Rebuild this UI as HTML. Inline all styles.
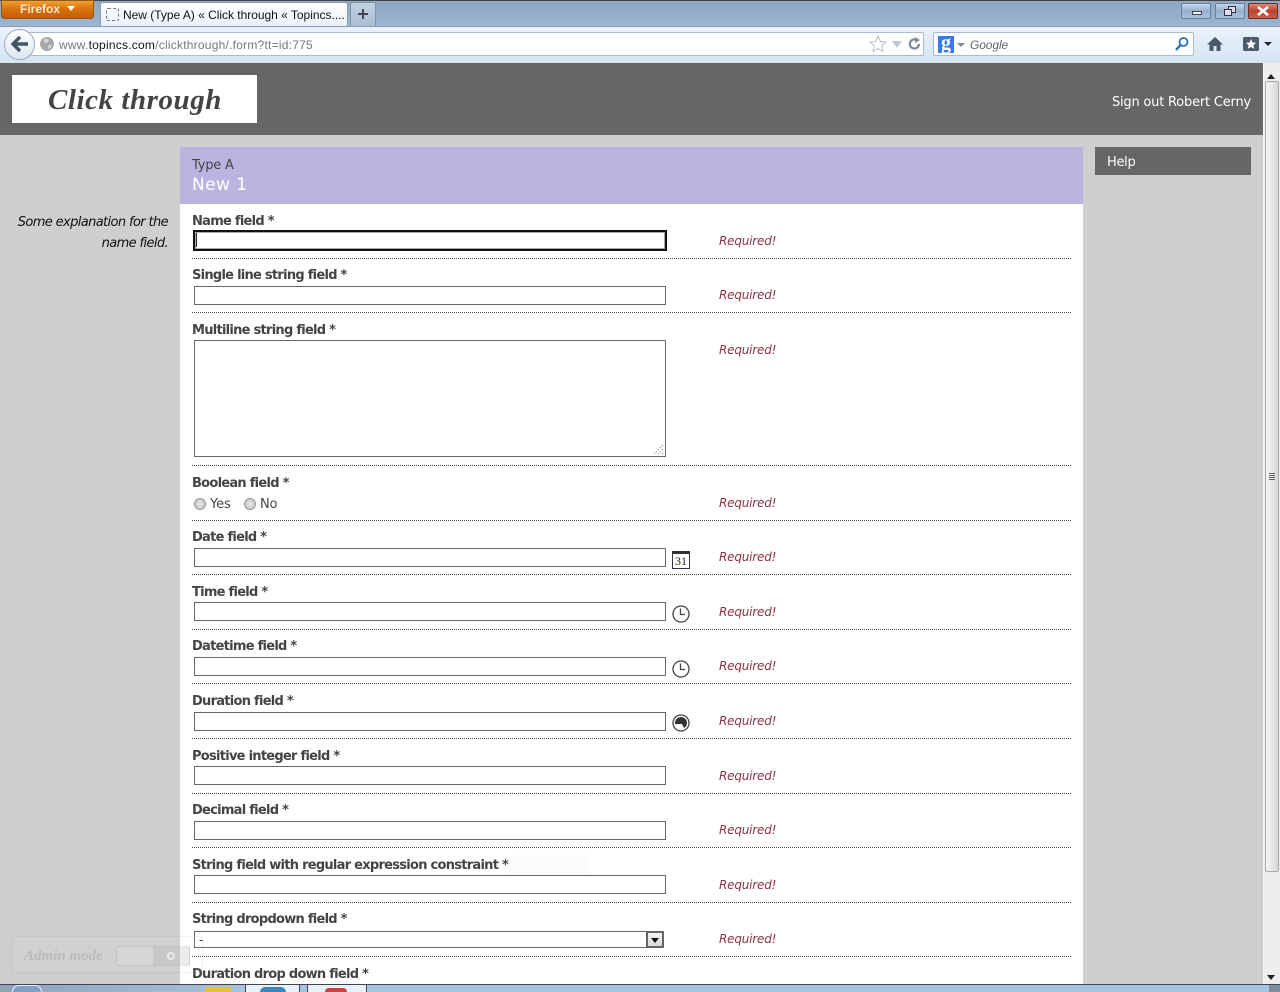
<!DOCTYPE html>
<html><head><meta charset="utf-8"><title>New (Type A) « Click through « Topincs</title>
<style>
html,body{margin:0;padding:0;width:1280px;height:992px;overflow:hidden;background:#cfcfcf;font-family:"DejaVu Sans",sans-serif}
div,span,svg{position:absolute;box-sizing:border-box}
#w{left:0;top:0;width:1280px;height:992px;overflow:hidden;background:#cfcfcf}
.t{white-space:nowrap;line-height:16px}
.ff{font-family:"Liberation Sans",sans-serif}
.l{left:192px;font-weight:bold;font-size:13px;color:#444;letter-spacing:-.73px;margin-top:1px}
.r{left:719px;font-style:italic;font-size:12px;color:#8a3344;letter-spacing:-.2px}
.i{left:194px;width:472px;height:19px;background:#fff;border:1px solid #666}
.h{left:192px;width:879px;height:1px;background-image:linear-gradient(90deg,#444 50%,transparent 50%);background-size:2px 1px}
</style></head><body><div id="w">
<!-- browser chrome -->
<div style="left:0;top:0;width:1280px;height:26px;background:linear-gradient(#8ea6bf,#9db6d0)"></div>
<div style="left:0;top:0;width:1280px;height:1px;background:#444"></div>
<div style="left:1px;top:0;width:93px;height:19px;background:linear-gradient(#f0a030,#d8700c 50%,#c45f08);border:1px solid #8a5a20;border-radius:0 0 3px 3px"></div>
<div class="t ff" style="left:20px;top:1px;font-size:12px;font-weight:bold;color:#f8e8d0">Firefox</div>
<div style="left:67px;top:6px;width:0;height:0;border:4px solid transparent;border-top:5px solid #fff"></div>
<div style="left:100px;top:2px;width:248px;height:25px;background:linear-gradient(#fff,#e8f0f8);border:1px solid #8a9db2;border-bottom:0;border-radius:3px 3px 0 0"></div>
<div style="left:106px;top:8px;width:13px;height:13px;border:1px dashed #777;border-radius:2px"></div>
<div class="t ff" style="left:123px;top:7px;font-size:12px;color:#111;letter-spacing:-.02px">New (Type A) « Click through « Topincs....</div>
<div style="left:350px;top:2px;width:26px;height:24px;background:linear-gradient(#c3d2e2,#a9bdd2);border:1px solid #8093a8;border-bottom:0;border-radius:2px 2px 0 0"></div>
<div style="left:358px;top:13px;width:10px;height:2px;background:#445"></div>
<div style="left:362px;top:9px;width:2px;height:10px;background:#445"></div>
<div style="left:1181px;top:3px;width:30px;height:16px;background:linear-gradient(#c5d7ea,#95b0cc 50%,#a9c2dc);border:1px solid #6b7f96;border-radius:2px"></div>
<div style="left:1192px;top:11px;width:10px;height:4px;background:#eef;border:1px solid #445"></div>
<div style="left:1215px;top:3px;width:30px;height:16px;background:linear-gradient(#c5d7ea,#95b0cc 50%,#a9c2dc);border:1px solid #6b7f96;border-radius:2px"></div>
<div style="left:1228px;top:6px;width:8px;height:7px;border:1px solid #334;background:#dde"></div>
<div style="left:1224px;top:9px;width:8px;height:7px;border:1px solid #334;background:#dde"></div>
<div style="left:1248px;top:3px;width:30px;height:16px;background:linear-gradient(#dc8a78,#b8432c 50%,#c8604a);border:1px solid #6a2a2a;border-radius:2px"></div>
<svg style="left:1257px;top:6px" width="12" height="10"><path d="M1 1L11 9M11 1L1 9" stroke="#fff" stroke-width="2.6"/></svg>
<div style="left:0;top:26px;width:1280px;height:37px;background:linear-gradient(#e9f2fb,#d6e4f3);border-top:1px solid #8b9cb0"></div>
<div style="left:26px;top:32px;width:898px;height:24px;background:#fff;border:1px solid #a9bbd0;border-radius:2px"></div>
<div style="left:4px;top:29px;width:31px;height:31px;border-radius:50%;background:linear-gradient(#fff,#dde7f2);border:1px solid #9aacc0"></div>
<svg style="left:10px;top:35px" width="20" height="18"><path d="M10 2L3 9L10 16M3 9H18" fill="none" stroke="#445566" stroke-width="3.4"/></svg>
<div style="left:40px;top:37px;width:14px;height:14px;border-radius:50%;background:#a8a8a8"></div>
<svg style="left:40px;top:37px" width="14" height="14"><path d="M5 1L9 3L7 6L4 5ZM9 8L12 8L10 12L8 11Z" fill="#d8d8d8"/></svg>
<div class="t ff" style="left:59px;top:37px;font-size:12px;color:#777;letter-spacing:.23px">www.<span style="position:static;color:#111">topincs.com</span>/clickthrough/.form?tt=id:775</div>
<svg style="left:869px;top:35px" width="18" height="18"><path d="M9 1L11.4 6.5L17 7L12.8 10.8L14 16.5L9 13.6L4 16.5L5.2 10.8L1 7L6.6 6.5Z" fill="#fff" stroke="#b8bcc0"/></svg>
<div style="left:892px;top:41px;width:0;height:0;border:5px solid transparent;border-top:7px solid #c0c8d0"></div>
<svg style="left:908px;top:37px" width="13" height="14"><path d="M11 7A4.6 4.6 0 1 1 8 2.6" fill="none" stroke="#7d8a96" stroke-width="2.2"/><path d="M7 0L12 3L7 6Z" fill="#7d8a96"/></svg>
<div style="left:933px;top:32px;width:261px;height:24px;background:#fff;border:1px solid #a9bbd0;border-radius:2px"></div>
<div class="t" style="left:938px;top:36px;width:16px;height:17px;background:#3b78e7;color:#fff;font:bold 20px/15px 'Liberation Serif',serif;text-align:center">g</div>
<div style="left:957px;top:43px;width:0;height:0;border:4px solid transparent;border-top:4px solid #889"></div>
<div class="t ff" style="left:970px;top:37px;font-size:12px;font-style:italic;color:#666;letter-spacing:-.1px">Google</div>
<svg style="left:1174px;top:36px" width="15" height="16"><circle cx="9.5" cy="6" r="4" fill="none" stroke="#2a6fb0" stroke-width="1.8"/><path d="M6.5 9L2 14" stroke="#2a6fb0" stroke-width="2.4"/></svg>
<svg style="left:1207px;top:36px" width="16" height="16"><path d="M8 1L0 8.5H2.5V15H6.5V10H9.5V15H13.5V8.5H16Z" fill="#4a5a68"/></svg>
<div style="left:1243px;top:37px;width:16px;height:14px;background:#4c5c6c;border-radius:2px"></div>
<svg style="left:1245px;top:38px" width="12" height="12"><path d="M6 1L7.5 4.4L11 4.8L8.4 7.2L9.1 10.8L6 9L2.9 10.8L3.6 7.2L1 4.8L4.5 4.4Z" fill="#fff"/></svg>
<div style="left:1264px;top:42px;width:0;height:0;border:4px solid transparent;border-top:4px solid #223"></div>
<!-- page -->
<div style="left:0;top:63px;width:1263px;height:72px;background:#666"></div>
<div style="left:12px;top:75px;width:245px;height:48px;background:#fff"></div>
<div class="t" style="left:48px;top:85px;font:italic bold 29px/30px 'Liberation Serif',serif;color:#444;letter-spacing:.55px">Click through</div>
<div class="t" style="right:29px;top:95px;font-size:13px;color:#fff;letter-spacing:-.2px">Sign out Robert Cerny</div>
<div class="t" style="left:0;top:212px;width:168px;text-align:right;font-size:13px;line-height:21px;font-style:italic;color:#111;letter-spacing:-.62px;white-space:nowrap">Some explanation for the<br>name field.</div>
<div style="left:180px;top:147px;width:903px;height:837px;background:#fff"></div>
<div style="left:180px;top:147px;width:903px;height:57px;background:#b9b5e0"></div>
<div class="t" style="left:192px;top:158px;font-size:13px;color:#444;letter-spacing:-.2px">Type A</div>
<div class="t" style="left:192px;top:176px;font-size:17px;line-height:18px;color:#fff;letter-spacing:.4px">New 1</div>
<div style="left:1095px;top:147px;width:156px;height:28px;background:#666"></div>
<div class="t" style="left:1107px;top:155px;font-size:13px;color:#fff;letter-spacing:-.3px">Help</div>
<!-- fields -->
<div class="t l" style="top:213px">Name field *</div>
<div style="left:193px;top:230px;width:474px;height:21px;background:#fff;border:2px solid #111;box-shadow:inset 0 0 0 1px #aaa"></div>
<div style="left:196px;top:233px;width:1px;height:14px;background:#222"></div>
<div class="t r" style="top:233px">Required!</div>
<div class="h" style="top:258px"></div>
<div class="t l" style="top:267px">Single line string field *</div>
<div class="i" style="top:286px"></div>
<div class="t r" style="top:287px">Required!</div>
<div class="h" style="top:312px"></div>
<div class="t l" style="top:322px">Multiline string field *</div>
<div class="i" style="top:340px;height:117px"></div>
<svg style="left:652px;top:443px" width="12" height="12"><path d="M11 2L2 11M11 6L6 11M11 10L10 11" stroke="#999" stroke-dasharray="1.5 1.5"/></svg>
<div class="t r" style="top:342px">Required!</div>
<div class="h" style="top:465px"></div>
<div class="t l" style="top:475px">Boolean field *</div>
<div style="left:194px;top:498px;width:12px;height:12px;border-radius:50%;background:radial-gradient(#e8e8e8,#bbb);border:1px solid #999"></div>
<div class="t" style="left:210px;top:497px;font-size:13px;color:#444;letter-spacing:-.1px">Yes</div>
<div style="left:244px;top:498px;width:12px;height:12px;border-radius:50%;background:radial-gradient(#e8e8e8,#bbb);border:1px solid #999"></div>
<div class="t" style="left:260px;top:497px;font-size:13px;color:#444;letter-spacing:-.2px">No</div>
<div class="t r" style="top:495px">Required!</div>
<div class="h" style="top:520px"></div>
<div class="t l" style="top:529px">Date field *</div>
<div class="i" style="top:548px"></div>
<div style="left:672px;top:551px;width:18px;height:18px;background:#fff;border:1px solid #334;border-top:3px solid #333"></div>
<div class="t" style="left:672px;top:554px;width:18px;text-align:center;font:12px/15px 'Liberation Serif',serif;color:#222">31</div>
<div class="t r" style="top:549px">Required!</div>
<div class="h" style="top:574px"></div>
<div class="t l" style="top:584px">Time field *</div>
<div class="i" style="top:602px"></div>
<svg style="left:672px;top:605px" width="18" height="18"><circle cx="9" cy="9" r="8" fill="#fff" stroke="#444" stroke-width="1.3"/><path d="M8.5 3.5V9.5H13" fill="none" stroke="#444" stroke-width="1.3"/></svg>
<div class="t r" style="top:604px">Required!</div>
<div class="h" style="top:629px"></div>
<div class="t l" style="top:638px">Datetime field *</div>
<div class="i" style="top:657px"></div>
<svg style="left:672px;top:660px" width="18" height="18"><circle cx="9" cy="9" r="8" fill="#fff" stroke="#444" stroke-width="1.3"/><path d="M8.5 3.5V9.5H13" fill="none" stroke="#444" stroke-width="1.3"/></svg>
<div class="t r" style="top:658px">Required!</div>
<div class="h" style="top:683px"></div>
<div class="t l" style="top:693px">Duration field *</div>
<div class="i" style="top:712px"></div>
<svg style="left:672px;top:714px" width="18" height="18"><circle cx="9" cy="9" r="8" fill="#fff" stroke="#444" stroke-width="1.3"/><path d="M3 9A6 6 0 0 1 15 9A6 6 0 0 1 12 14L10 10H3Z" fill="#333"/></svg>
<div class="t r" style="top:713px">Required!</div>
<div class="h" style="top:738px"></div>
<div class="t l" style="top:748px">Positive integer field *</div>
<div class="i" style="top:766px"></div>
<div class="t r" style="top:768px">Required!</div>
<div class="h" style="top:793px"></div>
<div class="t l" style="top:802px">Decimal field *</div>
<div class="i" style="top:821px"></div>
<div class="t r" style="top:822px">Required!</div>
<div class="h" style="top:847px"></div>
<div style="left:510px;top:855px;width:79px;height:20px;background:#fbfbfb"></div>
<div class="t l" style="top:857px">String field with regular expression constraint *</div>
<div class="i" style="top:875px"></div>
<div class="t r" style="top:877px">Required!</div>
<div class="h" style="top:902px"></div>
<div class="t l" style="top:911px">String dropdown field *</div>
<div style="left:194px;top:931px;width:470px;height:17px;background:#fff;border:1px solid #666"></div>
<div class="t" style="left:199px;top:932px;font-size:12px;color:#333">-</div>
<div style="left:646px;top:931px;width:18px;height:17px;background:linear-gradient(#f4f4f4,#d8d8d8);border:2px solid #666"></div>
<div style="left:651px;top:938px;width:0;height:0;border:4px solid transparent;border-top:5px solid #111"></div>
<div class="t r" style="top:931px">Required!</div>
<div class="h" style="top:956px"></div>
<div class="t l" style="top:966px">Duration drop down field *</div>
<!-- admin overlay -->
<div style="left:11px;top:936px;width:192px;height:37px;border:1px solid rgba(130,130,130,.12);background:rgba(255,255,255,.05)"></div>
<div class="t" style="left:24px;top:948px;font:italic bold 15px/16px 'Liberation Serif',serif;color:#bbb">Admin mode</div>
<div style="left:116px;top:946px;width:74px;height:20px;border:1px solid rgba(110,110,110,.2);background:rgba(255,255,255,.12)"></div>
<div style="left:153px;top:947px;width:37px;height:18px;background:rgba(100,100,100,.12)"></div>
<div style="left:167px;top:952px;width:8px;height:8px;border-radius:50%;border:2px solid rgba(255,255,255,.6)"></div>
<!-- scrollbar -->
<div style="left:1263px;top:63px;width:17px;height:921px;background:#eee;border-left:1px solid #f8f8f8"></div>
<div style="left:1267px;top:70px;width:0;height:0;border:4px solid transparent;border-bottom:5px solid #222"></div>
<div style="left:1265px;top:81px;width:14px;height:791px;background:linear-gradient(90deg,#f4f4f4,#d8d8d8);border:1px solid #aaa;border-radius:2px"></div>
<div style="left:1269px;top:473px;width:6px;height:7px;background-image:linear-gradient(#666 50%,transparent 50%);background-size:6px 2px"></div>
<div style="left:1267px;top:975px;width:0;height:0;border:4px solid transparent;border-top:5px solid #222"></div>
<!-- taskbar -->
<div style="left:0;top:984px;width:1280px;height:8px;background:linear-gradient(90deg,#8ea3b8,#a9c4e0 20%,#a9c4e0);border-top:1px solid #445"></div>
<div style="left:12px;top:985px;width:30px;height:7px;border-radius:15px 15px 0 0;background:#7f9fc4;border:1px solid #eef;border-bottom:0"></div>
<div style="left:205px;top:987px;width:26px;height:5px;background:#e8c040"></div>
<div style="left:245px;top:984px;width:55px;height:8px;background:#e8f0f8;border:1px solid #445;border-bottom:0"></div>
<div style="left:260px;top:987px;width:26px;height:5px;background:#3a86c0;border-radius:13px 13px 0 0"></div>
<div style="left:307px;top:984px;width:60px;height:8px;background:#e8f0f8;border:1px solid #445;border-bottom:0"></div>
<div style="left:325px;top:988px;width:22px;height:4px;background:#d04040;border-radius:11px 11px 0 0"></div>
<div style="left:1269px;top:985px;width:11px;height:7px;background:#7f8c99"></div>
</div></body></html>
